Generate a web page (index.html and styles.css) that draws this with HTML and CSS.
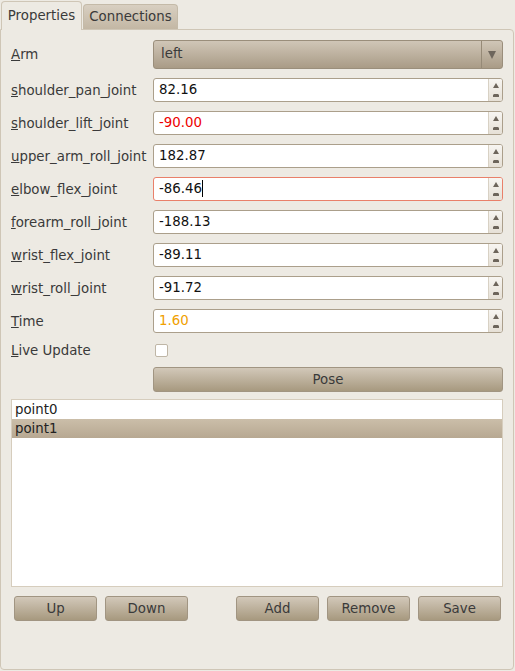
FILE: index.html
```html
<!DOCTYPE html>
<html lang="en">
<head>
    <meta charset="UTF-8">
    <title>Trajectory Properties</title>
    <link rel="stylesheet" href="styles.css">
</head>
<body>
    <div class="tabs">
        <div class="tab active">Properties</div>
        <div class="tab">Connections</div>
    </div>

    <div class="panel">
        <div class="row arm-row">
            <label><u>A</u>rm</label>
            <div class="combo">
                <span class="combo-text">left</span>
                <span class="combo-arrow"></span>
            </div>
        </div>

        <div class="row">
            <label><u>s</u>houlder_pan_joint</label>
            <div class="spin"><span class="value">82.16</span><span class="spin-btns"><i class="up"></i><i class="down"></i></span></div>
        </div>
        <div class="row">
            <label><u>s</u>houlder_lift_joint</label>
            <div class="spin"><span class="value limit">-90.00</span><span class="spin-btns"><i class="up"></i><i class="down"></i></span></div>
        </div>
        <div class="row">
            <label><u>u</u>pper_arm_roll_joint</label>
            <div class="spin"><span class="value">182.87</span><span class="spin-btns"><i class="up"></i><i class="down"></i></span></div>
        </div>
        <div class="row">
            <label><u>e</u>lbow_flex_joint</label>
            <div class="spin focused"><span class="value">-86.46<span class="caret"></span></span><span class="spin-btns"><i class="up"></i><i class="down"></i></span></div>
        </div>
        <div class="row">
            <label><u>f</u>orearm_roll_joint</label>
            <div class="spin"><span class="value">-188.13</span><span class="spin-btns"><i class="up"></i><i class="down"></i></span></div>
        </div>
        <div class="row">
            <label><u>w</u>rist_flex_joint</label>
            <div class="spin"><span class="value">-89.11</span><span class="spin-btns"><i class="up"></i><i class="down"></i></span></div>
        </div>
        <div class="row">
            <label><u>w</u>rist_roll_joint</label>
            <div class="spin"><span class="value">-91.72</span><span class="spin-btns"><i class="up"></i><i class="down"></i></span></div>
        </div>
        <div class="row">
            <label><u>T</u>ime</label>
            <div class="spin"><span class="value time">1.60</span><span class="spin-btns"><i class="up"></i><i class="down"></i></span></div>
        </div>

        <div class="row live-row">
            <label><u>L</u>ive Update</label>
            <span class="check"></span>
        </div>

        <div class="row pose-row">
            <span></span>
            <div class="button">Pose</div>
        </div>

        <div class="points">
            <div class="point">point0</div>
            <div class="point selected">point1</div>
        </div>

        <div class="actions">
            <div class="group">
                <div class="button">Up</div>
                <div class="button">Down</div>
            </div>
            <div class="group">
                <div class="button">Add</div>
                <div class="button">Remove</div>
                <div class="button">Save</div>
            </div>
        </div>
    </div>
</body>
</html>
```

FILE: styles.css
```css
body {
    margin: 0;
    padding: 1px 0 0 0;
    background-color: #edeae3;
    font-family: "DejaVu Sans", sans-serif;
    font-size: 13.33px;
    color: #3a3a3a;
    width: 514px;
    height: 670px;
    overflow: hidden;
}

/* notebook tabs */
.tabs {
    display: flex;
    align-items: flex-end;
    height: 28px;
    gap: 1px;
    padding-left: 1px;
}
.tab {
    box-sizing: border-box;
    width: 95px;
    height: 25px;
    line-height: 23px;
    text-align: center;
    border: 1px solid #c4baa8;
    border-bottom: none;
    border-radius: 4px 4px 0 0;
    background: linear-gradient(#d8cfc1, #c3b7a4);
    color: #3a3a3a;
}
.tab.active {
    width: 81px;
    height: 29px;
    margin-bottom: -1px;
    line-height: 27px;
    background: #edeae3;
    border-color: #cfc6b6;
    position: relative;
    z-index: 1;
}

.panel {
    box-sizing: border-box;
    height: 641px;
    border: 1px solid #cfc6b6;
    border-radius: 0 4px 4px 4px;
    padding: 10px 10px 0 10px;
}

/* form rows */
.row {
    display: grid;
    grid-template-columns: 142px 1fr;
    align-items: center;
    height: 24px;
    margin-bottom: 9px;
}
.row label {
    white-space: nowrap;
}
.arm-row {
    height: 29px;
}
.live-row {
    height: 16px;
    margin-top: 9px;
}
.pose-row {
    height: 25px;
    margin-bottom: 7px;
}

.combo {
    box-sizing: border-box;
    height: 29px;
    display: flex;
    border: 1px solid #9a8e7b;
    border-radius: 3px;
    background: linear-gradient(#d0c6b7, #a99b86);
}
.combo-text {
    flex: 1;
    padding-left: 7px;
    line-height: 26px;
    border-right: 1px solid #968a77;
}
.combo-arrow {
    width: 20px;
    position: relative;
}
.combo-arrow:after {
    content: "";
    position: absolute;
    left: 6px;
    top: 10px;
    border-left: 4px solid transparent;
    border-right: 4px solid transparent;
    border-top: 8px solid #6e665c;
}

.spin {
    box-sizing: border-box;
    height: 24px;
    display: flex;
    border: 1px solid #ab9f8b;
    border-radius: 3px;
    background: #fff;
}
.spin.focused {
    border-color: #e9806a;
}
.spin .value {
    flex: 1;
    padding-left: 5px;
    line-height: 22px;
    color: #111;
}
.spin .value.limit {
    color: #ee0000;
}
.spin .value.time {
    color: #f0a000;
}
.caret {
    display: inline-block;
    width: 1px;
    height: 17px;
    background: #000;
    vertical-align: -4px;
}
.spin-btns {
    width: 13px;
    border-left: 1px solid #d8d1c4;
    background: linear-gradient(#f7f5f1, #e6e0d6);
    border-radius: 0 2px 2px 0;
    position: relative;
}
.spin-btns .up {
    position: absolute;
    left: 4px;
    top: 4px;
    border-left: 3px solid transparent;
    border-right: 3px solid transparent;
    border-bottom: 5px solid #6d655b;
}
.spin-btns .down {
    position: absolute;
    left: 4px;
    bottom: 4px;
    width: 6px;
    height: 2px;
    background: #6d655b;
}
.spin-btns .down:before {
    content: "";
    position: absolute;
    left: 0;
    top: -1px;
    border-left: 3px solid transparent;
    border-right: 3px solid transparent;
    border-top: 3px solid #6d655b;
}

.check {
    box-sizing: border-box;
    width: 13px;
    height: 13px;
    margin-left: 2px;
    border: 1px solid #bfb6a6;
    border-radius: 2px;
    background: #fff;
}

.button {
    box-sizing: border-box;
    height: 25px;
    line-height: 23px;
    text-align: center;
    border: 1px solid #a19582;
    border-radius: 3px;
    background: linear-gradient(#d2c8b9, #a7997f);
    color: #3a3a3a;
}

/* point list */
.points {
    box-sizing: border-box;
    height: 188px;
    border: 1px solid #d6cdbd;
    background: #fff;
}
.point {
    height: 19px;
    line-height: 19px;
    padding-left: 3px;
    color: #222;
}
.point.selected {
    background: linear-gradient(#cbbea9, #b7a892);
}

.actions {
    display: flex;
    justify-content: space-between;
    margin-top: 9px;
    padding: 0 2px 0 3px;
}
.actions .group {
    display: flex;
    gap: 8px;
}
.actions .button {
    width: 83px;
}
```
